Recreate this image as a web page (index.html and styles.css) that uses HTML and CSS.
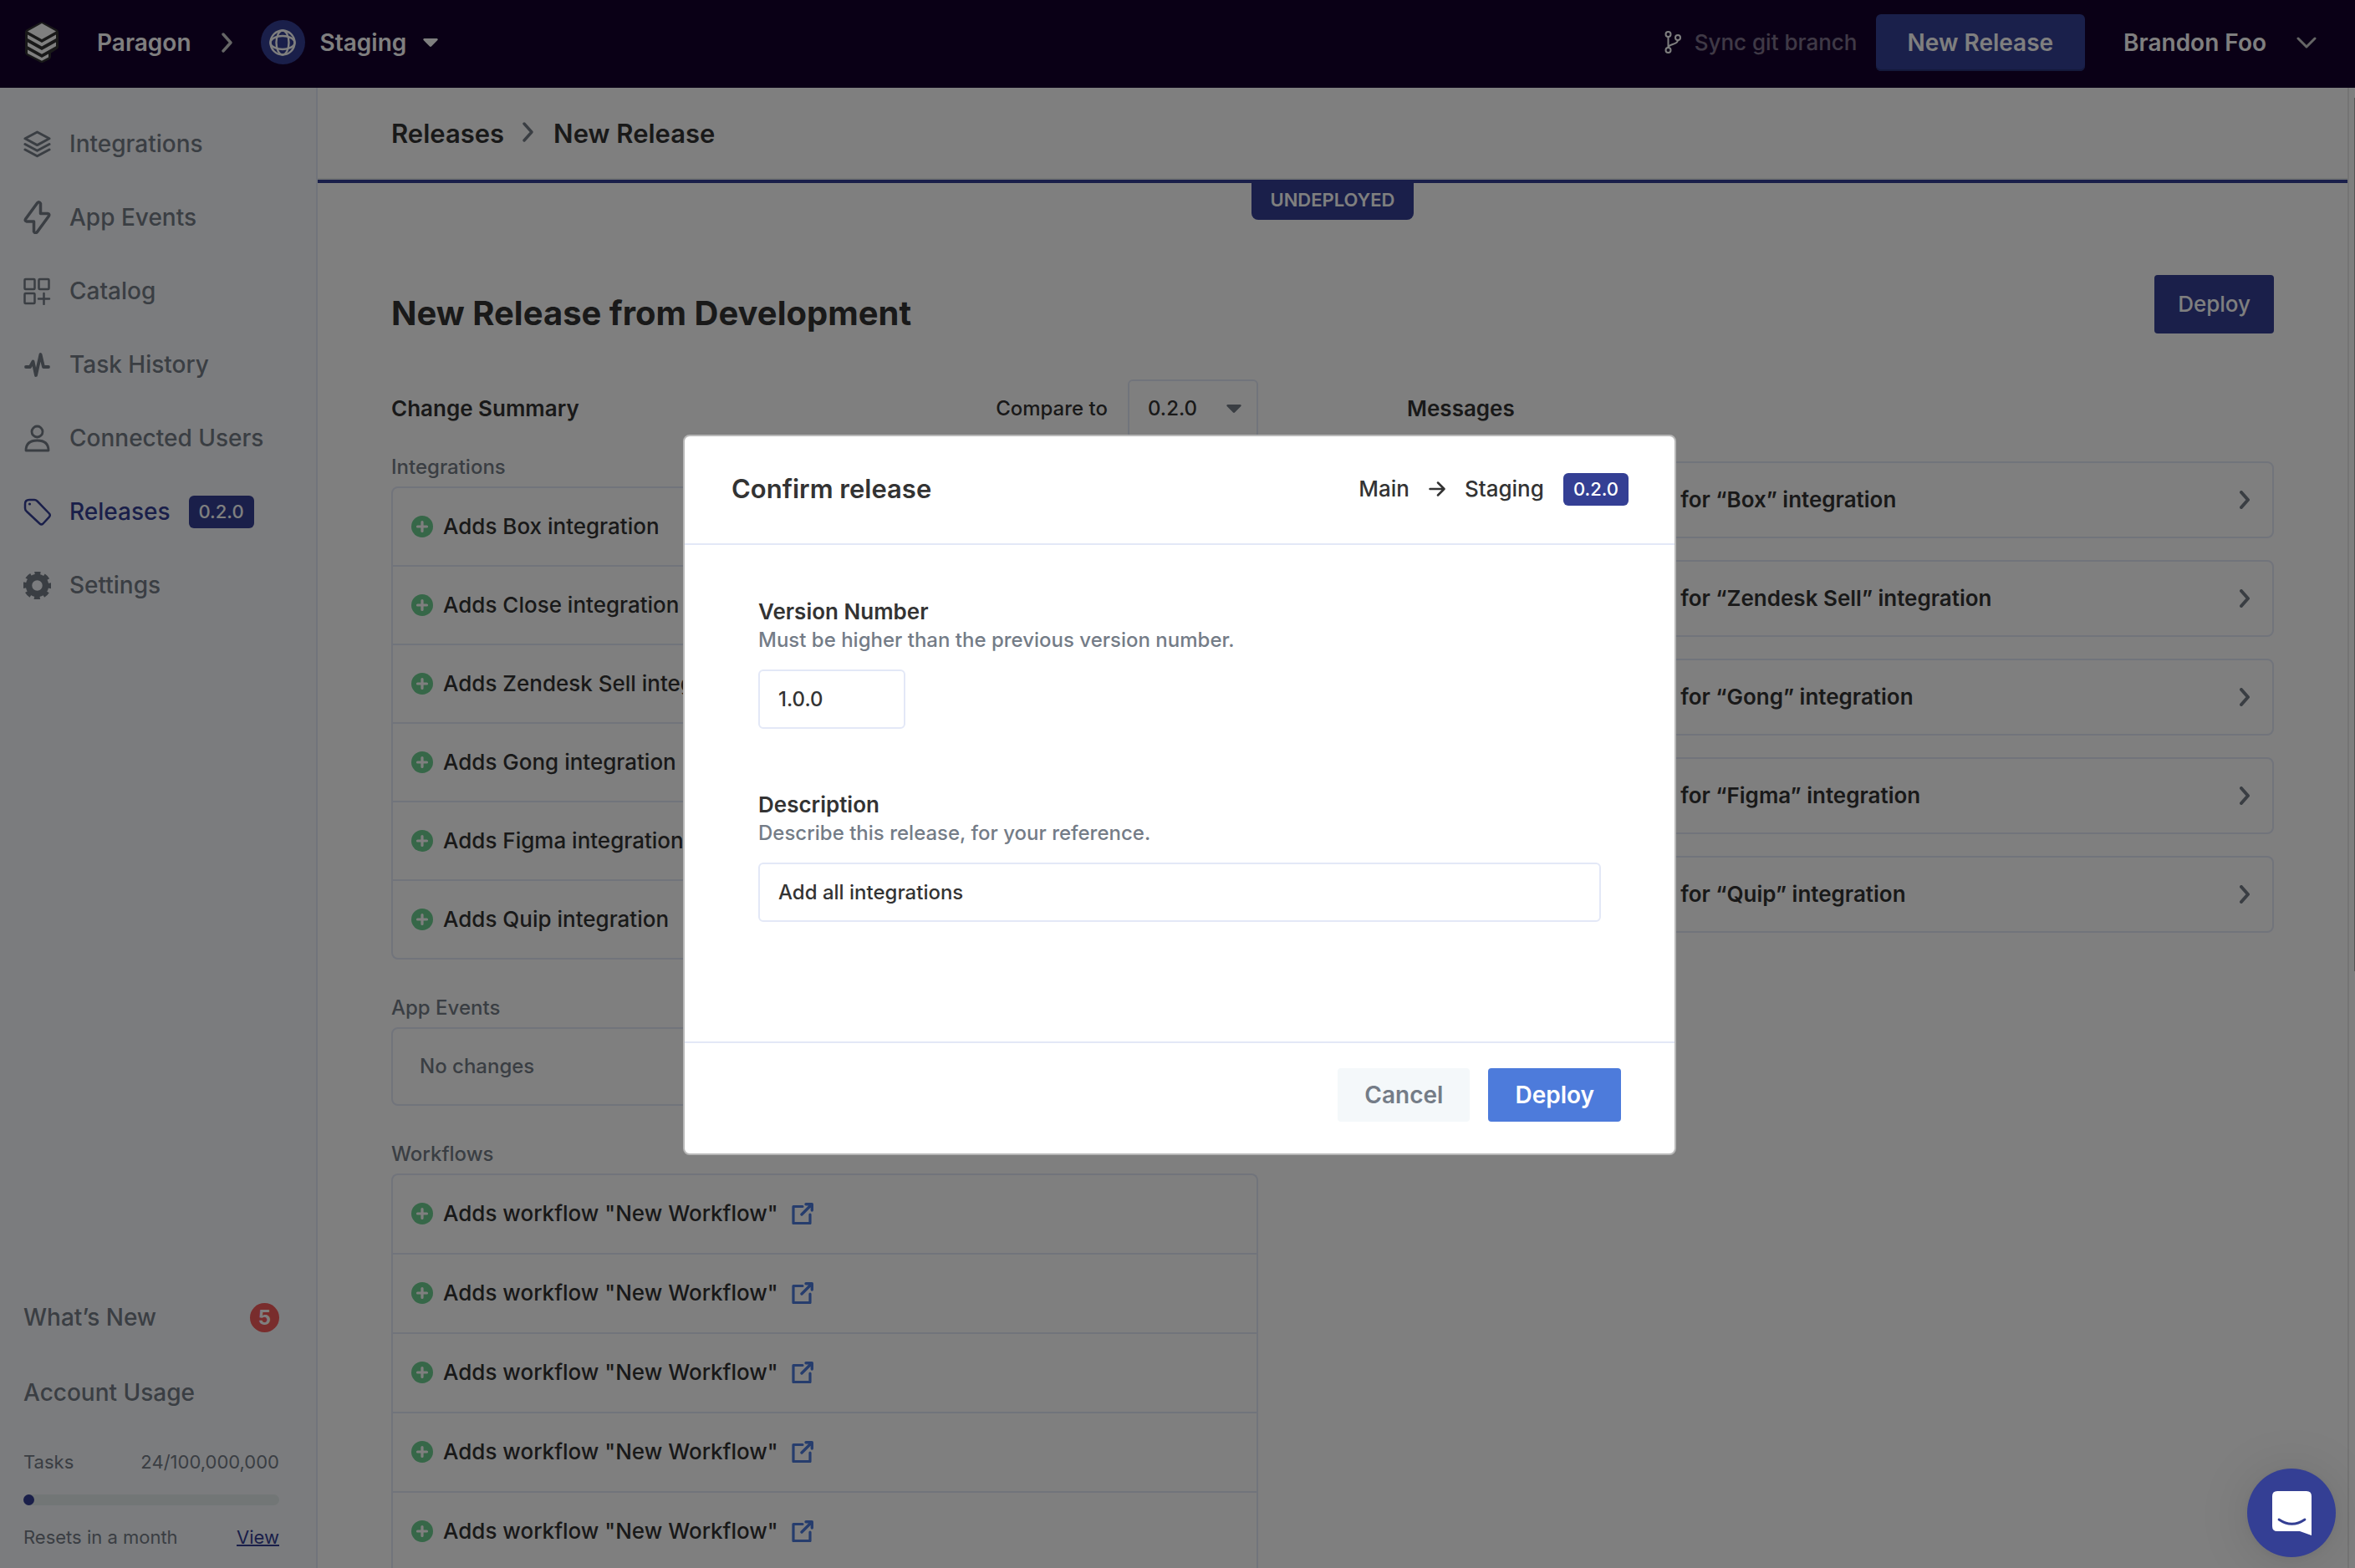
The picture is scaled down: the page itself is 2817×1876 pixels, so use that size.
FILE: index.html
```html
<!DOCTYPE html>
<html lang="en">
<head>
<meta charset="utf-8">
<meta name="viewport" content="width=device-width, initial-scale=1">
<title>New Release – Paragon</title>
<link rel="stylesheet" href="styles.css">
</head>
<body>
<svg class="sprite" aria-hidden="true">
  <symbol id="i-plus" viewBox="0 0 26 26"><circle cx="13" cy="13" r="13" fill="#6dcf90"/><path d="M13 7.500v11M7.500 13h11" stroke="#fff" stroke-width="3.200" stroke-linecap="round"/></symbol>
  <symbol id="i-next" viewBox="0 0 12 22"><path d="M2 2l8 9-8 9" fill="none" stroke="currentColor" stroke-width="4" stroke-linecap="round" stroke-linejoin="round"/></symbol>
  <symbol id="i-crumb" viewBox="0 0 14 24"><path d="M2 2l9 10-9 10" fill="none" stroke="currentColor" stroke-width="3.400" stroke-linecap="round" stroke-linejoin="round"/></symbol>
  <symbol id="i-open" viewBox="0 0 26 26"><path d="M13 4.500H2V24.500H22V14" fill="none" stroke="currentColor" stroke-width="3.200" stroke-linejoin="round" stroke-linecap="round"/><path d="M12 14L24 2M17 1.700h7.300V9" fill="none" stroke="currentColor" stroke-width="3.400" stroke-linecap="round" stroke-linejoin="round"/></symbol>
  <symbol id="i-caret" viewBox="0 0 18 10"><path d="M1.500 0h15a1.200 1.200 0 0 1 .9 2L10 9.500a1.400 1.400 0 0 1-2 0L.6 2a1.200 1.200 0 0 1 .9-2z" fill="currentColor"/></symbol>
</svg>

<div class="app">
  <header class="topbar">
    <svg class="logo" viewBox="0 0 40 49" aria-hidden="true">
      <path d="M18 .8q2-1.200 4 0l16 8.400q2 1.200 2 3.200V30q0 2-2 3l-7 4.500V42q0 2-2 3l-7 3.400q-2 1-4 0L2 40q-2-1.200-2-3.200V12.400q0-2 2-3.200z" fill="#333"/>
      <path d="M20 2L37 11.500 20 21 3 11.500z" fill="#fff"/>
      <path d="M3 15.500L20 25l17-9.500V20L20 29.500 3 20z" fill="#fff"/>
      <path d="M3 24.500L20 34l17-9.500v4.700L20 38.700 3 29.200z" fill="#fff"/>
      <path d="M3 33.500L20 43l8-4.500V42.500l-8 4.300L3 38z" fill="#fff"/>
    </svg>
    <a class="workspace" href="#">Paragon</a>
    <svg class="top-crumb" aria-hidden="true"><use href="#i-crumb"/></svg>
    <button class="env" type="button">
      <span class="env-icon"><svg viewBox="0 0 32 32" width="32" height="32" fill="none" stroke="currentColor" stroke-width="2.400"><circle cx="16" cy="16" r="14.500"/><ellipse cx="16" cy="16" rx="7.500" ry="14.500"/><ellipse cx="16" cy="16" rx="14.500" ry="8"/></svg></span>
      Staging
      <svg class="caret" aria-hidden="true"><use href="#i-caret"/></svg>
    </button>
    <div class="top-actions">
      <button class="sync" type="button" disabled>
        <svg viewBox="0 0 20 27" width="20" height="27" fill="none" stroke="#fff" stroke-width="2"><circle cx="4.500" cy="4" r="3"/><circle cx="4.500" cy="23" r="3"/><circle cx="16" cy="8" r="3"/><path d="M4.500 7v13M16 11c0 6-11.500 4-11.500 9"/></svg>
        <span>Sync git branch</span>
      </button>
      <button class="new-release" type="button">New Release</button>
      <button class="user" type="button">Brandon Foo
        <svg viewBox="0 0 24 14" width="24" height="14" fill="none" stroke="#ccc" stroke-width="3" stroke-linecap="round" stroke-linejoin="round"><path d="M2 2l10 10L22 2"/></svg>
      </button>
    </div>
  </header>

  <div class="body">
    <aside class="sidebar">
      <nav class="nav">
        <a href="#"><svg viewBox="0 0 33 33" fill="none" stroke="currentColor" stroke-width="3" stroke-linejoin="round" stroke-linecap="round"><path d="M16.500 2L31 9.800 16.500 17.600 2 9.800z"/><path d="M2 16.500l14.500 7.800L31 16.500M2 23l14.500 7.800L31 23"/></svg>Integrations</a>
        <a href="#"><svg viewBox="0 0 33 40" fill="none" stroke="currentColor" stroke-width="3.500" stroke-linejoin="round"><path d="M20.500 3.500Q19 .5 16.500 3L3 21.500q-2 3 1 3.500h8.500v12q1.500 3 4 .5L30 19q2-3-1-3.500h-8.500z"/></svg>App Events</a>
        <a href="#"><svg viewBox="0 0 33 33" fill="none" stroke="currentColor" stroke-width="2.500" stroke-linecap="round"><rect x="1.500" y="2" width="12" height="12" rx="1"/><rect x="18.500" y="2" width="12" height="12" rx="1"/><rect x="1.500" y="19" width="12" height="12" rx="1"/><path d="M24.500 19v13M18 25.500h13"/></svg>Catalog</a>
        <a href="#"><svg viewBox="0 0 33 33" fill="none" stroke="currentColor" stroke-width="3.800" stroke-linejoin="round" stroke-linecap="round"><path d="M3 19h5l3.500-6.500L15 29l5.500-25 3.500 15h6"/></svg>Task History</a>
        <a href="#"><svg viewBox="0 0 33 33" fill="none" stroke="currentColor" stroke-width="2.800" stroke-linejoin="round"><circle cx="16.500" cy="8.500" r="6.500"/><path d="M3 31c0-8 4-12 13.500-12S30 23 30 31z"/></svg>Connected Users</a>
        <a class="active" href="#"><svg viewBox="0 0 33 33" fill="none" stroke="currentColor" stroke-width="2.500" stroke-linejoin="round"><path d="M2 7q0-5 5-5h6q2 0 3.500 1.500L31 18.500q1.500 2 0 3.800L23.500 30.500q-2 1.800-4 0L4 16q-2-1.500-2-4z"/><circle cx="7.500" cy="7" r="1.600" fill="currentColor" stroke="none"/></svg>Releases <span class="tag">0.2.0</span></a>
        <a href="#"><svg viewBox="0 0 33 33" fill="none" stroke="currentColor"><circle cx="16.500" cy="16.500" r="10" stroke-width="7.500"/><circle cx="16.500" cy="16.500" r="14.500" stroke-width="4.500" stroke-dasharray="6.800 4.588" stroke-dashoffset="3.400"/></svg>Settings</a>
      </nav>
      <div class="side-foot">
        <a class="foot-row" href="#">What’s New <span class="count">5</span></a>
        <a class="foot-row" href="#">Account Usage</a>
        <div class="usage-row"><span>Tasks</span><span>24/100,000,000</span></div>
        <div class="meter"><span></span></div>
        <div class="usage-row"><span>Resets in a month</span><a href="#">View</a></div>
      </div>
    </aside>

    <main class="main">
      <div class="crumbs"><a href="#">Releases</a><svg aria-hidden="true"><use href="#i-crumb"/></svg><span>New Release</span></div>
      <div class="status"><span>UNDEPLOYED</span></div>
      <div class="content">
        <div class="title-row"><h1>New Release from Development</h1><button class="deploy" type="button">Deploy</button></div>
        <div class="columns">
          <section>
            <div class="col-head">
              <h2>Change Summary</h2>
              <label for="compare">Compare to</label>
              <div class="select"><select id="compare"><option>0.2.0</option></select><svg aria-hidden="true"><use href="#i-caret"/></svg></div>
            </div>
            <h3>Integrations</h3>
            <ul class="list">
              <li><svg><use href="#i-plus"/></svg>Adds Box integration</li>
              <li><svg><use href="#i-plus"/></svg>Adds Close integration</li>
              <li><svg><use href="#i-plus"/></svg>Adds Zendesk Sell integration</li>
              <li><svg><use href="#i-plus"/></svg>Adds Gong integration</li>
              <li><svg><use href="#i-plus"/></svg>Adds Figma integration</li>
              <li><svg><use href="#i-plus"/></svg>Adds Quip integration</li>
            </ul>
            <h3>App Events</h3>
            <p class="empty">No changes</p>
            <h3>Workflows</h3>
            <ul class="list workflows">
              <li><svg><use href="#i-plus"/></svg>Adds workflow "New Workflow"<a href="#" aria-label="Open workflow"><svg><use href="#i-open"/></svg></a></li>
              <li><svg><use href="#i-plus"/></svg>Adds workflow "New Workflow"<a href="#" aria-label="Open workflow"><svg><use href="#i-open"/></svg></a></li>
              <li><svg><use href="#i-plus"/></svg>Adds workflow "New Workflow"<a href="#" aria-label="Open workflow"><svg><use href="#i-open"/></svg></a></li>
              <li><svg><use href="#i-plus"/></svg>Adds workflow "New Workflow"<a href="#" aria-label="Open workflow"><svg><use href="#i-open"/></svg></a></li>
              <li><svg><use href="#i-plus"/></svg>Adds workflow "New Workflow"<a href="#" aria-label="Open workflow"><svg><use href="#i-open"/></svg></a></li>
            </ul>
          </section>
          <section>
            <div class="col-head"><h2>Messages</h2></div>
            <div class="messages">
              <button type="button">Add a release message for “Box” integration<svg><use href="#i-next"/></svg></button>
              <button type="button">Add a release message for “Zendesk Sell” integration<svg><use href="#i-next"/></svg></button>
              <button type="button">Add a release message for “Gong” integration<svg><use href="#i-next"/></svg></button>
              <button type="button">Add a release message for “Figma” integration<svg><use href="#i-next"/></svg></button>
              <button type="button">Add a release message for “Quip” integration<svg><use href="#i-next"/></svg></button>
            </div>
          </section>
        </div>
      </div>
    </main>
    <div class="rail"><span></span></div>
  </div>
</div>

<div class="overlay">
  <form class="modal" role="dialog" aria-modal="true" aria-labelledby="modal-title">
    <header class="modal-head">
      <h2 id="modal-title">Confirm release</h2>
      <div class="route"><span>Main</span><svg viewBox="0 0 20 18" width="20" height="18" fill="none" stroke="currentColor" stroke-width="2.500" stroke-linecap="round" stroke-linejoin="round"><path d="M1.500 9h17M11 1.500L18.500 9 11 16.500"/></svg><span>Staging</span><span class="tag">0.2.0</span></div>
    </header>
    <div class="modal-body">
      <div class="field">
        <label for="version">Version Number</label>
        <p>Must be higher than the previous version number.</p>
        <input class="short" id="version" type="text" value="1.0.0">
      </div>
      <div class="field">
        <label for="description">Description</label>
        <p>Describe this release, for your reference.</p>
        <input id="description" type="text" value="Add all integrations">
      </div>
    </div>
    <footer class="modal-foot">
      <button class="cancel" type="button">Cancel</button>
      <button class="confirm" type="submit">Deploy</button>
    </footer>
  </form>
</div>

<button class="chat" type="button" aria-label="Open chat">
  <svg viewBox="0 0 47 53" width="47" height="53" aria-hidden="true"><path d="M6 0h35q6 0 6 6v47l-14-5H6q-6 0-6-6V6q0-6 6-6z" fill="#fff"/><path d="M8 34q15.500 10.500 31 0" fill="none" stroke="#343f94" stroke-width="2.800" stroke-linecap="round"/></svg>
</button>
</body>
</html>
```
FILE: styles.css
```css
:root {
  --ink: #333;
  --muted: #747c87;
  --line: #e3e8f7;
  --navy: #343f94;
  --blue: #4d7bdb;
}

* { box-sizing: border-box; }

body {
  margin: 0;
  color: var(--ink);
  background: #fff;
  font: 500 26px/30px Inter, "Liberation Sans", sans-serif;
}

h1, h2, h3, p, ul { margin: 0; padding: 0; font-size: inherit; font-weight: inherit; }
ul { list-style: none; }
a { color: inherit; text-decoration: none; }
svg { display: block; flex: none; }
button, input, select { margin: 0; font: inherit; color: inherit; }
button { padding: 0; border: 0; background: none; white-space: nowrap; }

.sprite { position: absolute; width: 0; height: 0; }

.app { display: flex; flex-direction: column; height: 100vh; overflow: hidden; }

/* Top bar */
.topbar {
  display: flex;
  flex: none;
  align-items: center;
  height: 105px;
  padding: 0 46px 4px 30px;
  color: #fff;
  background: #15002d;
  font-size: 28px;
  font-weight: 600;
}
.logo { width: 40px; height: 49px; }
.workspace { margin-left: 46px; }
.top-crumb { width: 14px; height: 24px; margin: 0 33px 0 36px; color: #ccc; }
.env { display: flex; align-items: center; font-weight: 600; }
.env-icon {
  display: flex;
  align-items: center;
  justify-content: center;
  width: 53px;
  height: 53px;
  margin-right: 18px;
  border-radius: 50%;
  background: var(--navy);
}
.caret { width: 18px; height: 10px; margin-left: 20px; }
.top-actions { display: flex; align-items: center; margin-left: auto; }
.sync { display: flex; gap: 16px; align-items: center; margin-right: 22px; font-size: 26px; font-weight: 500; }
.sync span { opacity: .45; }
.new-release {
  height: 68px;
  padding: 0 38px;
  border-radius: 6px;
  background: #344096;
  box-shadow: inset 0 -2px #283277;
  font-weight: 600;
}
.user { display: flex; gap: 36px; align-items: center; margin-left: 46px; font-weight: 600; }

/* Sidebar */
.body { display: flex; flex: 1; min-height: 0; }
.sidebar {
  display: flex;
  flex: none;
  flex-direction: column;
  justify-content: space-between;
  width: 380px;
  padding: 23px 44px 23px 28px;
  border-right: 2px solid var(--line);
  color: var(--muted);
  background: #f7f9fc;
  font-size: 28px;
}
.nav a { display: flex; align-items: center; height: 88px; }
.nav svg { width: 33px; height: 40px; margin-right: 22px; }
.nav svg[viewBox="0 0 33 33"] { height: 33px; }
.nav .active { color: var(--navy); }
.tag {
  padding: 0 12px;
  border-radius: 6px;
  color: #fff;
  background: var(--navy);
  font-size: 22px;
  font-weight: 500;
  line-height: 39px;
}
.nav .tag { margin-left: 22px; }
.foot-row { display: flex; align-items: center; justify-content: space-between; height: 90px; }
.count {
  width: 35px;
  border-radius: 50%;
  color: #fff;
  background: #f25a5a;
  font-size: 24px;
  font-weight: 700;
  line-height: 35px;
  text-align: center;
}
.usage-row { display: flex; justify-content: space-between; font-size: 22px; font-weight: 400; line-height: 28px; }
.foot-row + .usage-row { margin-top: 24px; }
.usage-row a { color: var(--navy); text-decoration: underline; text-decoration-thickness: 2px; }
.meter { height: 13px; margin: 25px 0 24px; border-radius: 7px; background: #e4ecec; }
.meter span { display: block; width: 13px; height: 13px; border-radius: 50%; background: var(--navy); }

/* Main */
.main { flex: 1; min-width: 0; }
.crumbs {
  display: flex;
  align-items: center;
  height: 110px;
  padding: 2px 88px 0;
  border-bottom: 2px solid #e6eaea;
  font-size: 31px;
  font-weight: 600;
}
.crumbs svg { width: 14px; height: 24px; margin: 0 23px 4px 22px; color: var(--muted); }
.status { display: flex; justify-content: center; border-top: 4px solid var(--navy); }
.status span {
  padding: 0 22px 4px;
  border-radius: 0 0 8px 8px;
  color: #fff;
  background: var(--navy);
  font-size: 22px;
  font-weight: 600;
  line-height: 40px;
}
.content { padding: 66px 88px 0; }
.title-row { display: flex; align-items: flex-end; justify-content: space-between; }
h1 { font-size: 40px; font-weight: 700; line-height: 48px; }
.deploy {
  height: 70px;
  padding: 0 28px;
  border-radius: 4px;
  color: #fff;
  background: var(--navy);
}
.columns { display: grid; grid-template-columns: 1fr 1fr; gap: 178px; margin-top: 55px; }
.col-head { display: flex; align-items: center; height: 70px; }
.col-head h2 { margin-right: auto; font-weight: 600; }
.col-head label { font-size: 24px; }
.select { display: grid; align-items: center; margin-left: 24px; }
.select > * { grid-area: 1 / 1; }
.select select {
  width: 156px;
  height: 70px;
  padding: 0 22px;
  border: 2px solid var(--line);
  border-radius: 6px;
  background: transparent;
  appearance: none;
  font-size: 24px;
}
.select svg { justify-self: end; width: 18px; height: 10px; margin-right: 20px; color: var(--muted); pointer-events: none; }
h3 { margin: 43px 0 8px; color: var(--muted); font-size: 24px; }
.col-head + h3 { margin-top: 20px; }
.list, .empty { border: 2px solid var(--line); border-radius: 8px; }
.list li { display: flex; gap: 12px; align-items: center; padding: 31px 22px; }
.list li + li { border-top: 2px solid var(--line); }
.list svg { width: 26px; height: 26px; }
.list a { margin-left: 4px; color: var(--blue); }
.workflows { border-bottom: 0; border-radius: 8px 8px 0 0; }
.workflows li { padding: 30px 22px 32px; line-height: 31px; }
.empty { padding: 30px 32px; color: var(--muted); font-size: 24px; }
.messages { display: grid; gap: 26px; margin-top: 28px; }
.messages button {
  display: flex;
  align-items: center;
  justify-content: space-between;
  height: 92px;
  padding: 0 27px;
  border: 2px solid var(--line);
  border-radius: 8px;
  font-weight: 600;
}
.messages svg { width: 12px; height: 22px; color: var(--muted); }
.rail { display: flex; justify-content: flex-end; width: 9px; border-left: 2px solid #e8e8e8; }
.rail span { width: 1px; height: 59%; margin-top: 12px; background: #aaa; }

/* Dialog */
.overlay {
  position: fixed;
  inset: 0;
  display: flex;
  align-items: center;
  justify-content: center;
  padding: 26px 0 0 5px;
  background: rgb(0 0 0 / 50%);
}
.modal {
  width: 1188px;
  border: 2px solid #b8b8b8;
  border-radius: 8px;
  background: #fff;
}
.modal-head {
  display: flex;
  align-items: center;
  justify-content: space-between;
  height: 130px;
  padding: 0 55px 2px 56px;
  border-bottom: 2px solid var(--line);
}
.modal-head h2 { font-size: 31px; font-weight: 600; }
.route { display: flex; gap: 23px; align-items: center; }
.modal-body { display: grid; gap: 74px; padding: 63px 88px 143px; }
.field label { display: block; font-weight: 600; line-height: 34px; }
.field p { margin-bottom: 18px; color: var(--muted); font-size: 24px; line-height: 34px; }
.field input {
  display: block;
  width: 100%;
  height: 71px;
  padding: 0 22px;
  border: 2px solid var(--line);
  border-radius: 6px;
  font-size: 24px;
}
.field .short { width: 176px; }
.modal-foot {
  display: flex;
  gap: 22px;
  justify-content: flex-end;
  padding: 30px 64px 38px;
  border-top: 2px solid var(--line);
}
.modal-foot button { height: 64px; padding: 0 32px; border-radius: 4px; font-size: 28px; font-weight: 600; }
.cancel { color: var(--muted); background: #f4f8fa; }
.confirm { color: #fff; background: var(--blue); }

/* Chat launcher */
.chat {
  position: fixed;
  right: 23px;
  bottom: 13px;
  display: flex;
  align-items: center;
  justify-content: center;
  width: 106px;
  height: 106px;
  border-radius: 50%;
  background: var(--navy);
  box-shadow: 0 2px 12px rgb(0 0 0 / 6%), 0 4px 64px rgb(0 0 0 / 12%);
}
```
